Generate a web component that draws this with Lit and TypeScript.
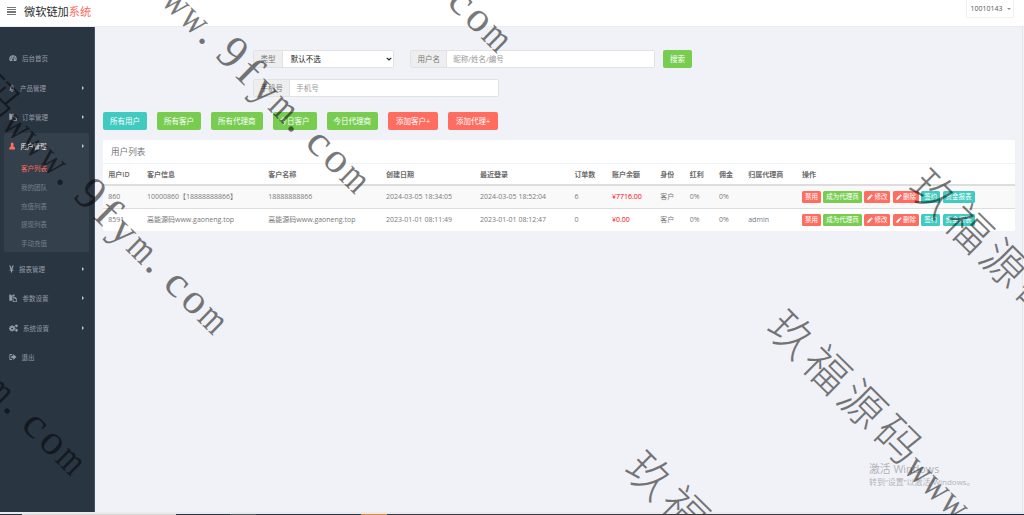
import { css, CSSResultGroup, html, LitElement, nothing, svg, TemplateResult } from "lit";
import { customElement, property } from "lit/decorators.js";
import { classMap } from "lit/directives/class-map.js";
import { styleMap } from "lit/directives/style-map.js";

interface MenuItem {
    icon: string;
    iconWidth: number;
    label: string;
    arrow?: boolean;
    children?: string[];
}

const MENU: MenuItem[] = [
    { icon: "dashboard", iconWidth: 8, label: "后台首页" },
    { icon: "bell", iconWidth: 6, label: "产品管理", arrow: true },
    { icon: "paste", iconWidth: 8, label: "订单管理", arrow: true },
    {
        icon: "user",
        iconWidth: 6.4,
        label: "用户管理",
        arrow: true,
        children: ["客户列表", "我的团队", "充值列表", "提现列表", "手动充值"],
    },
    { icon: "yen", iconWidth: 5, label: "报表管理", arrow: true },
    { icon: "paste", iconWidth: 8.4, label: "参数设置", arrow: true },
    { icon: "cogs", iconWidth: 9, label: "系统设置", arrow: true },
    { icon: "logout", iconWidth: 7.6, label: "退出" },
];

const FILTERS = [
    ["所有用户", "teal"],
    ["所有客户", "green"],
    ["所有代理商", "green"],
    ["今日客户", "green"],
    ["今日代理商", "green"],
    ["添加客户+", "red"],
    ["添加代理+", "red"],
];

const COLUMNS = [
    "用户ID", "客户信息", "客户名称", "创建日期", "最近登录", "订单数",
    "账户余额", "身份", "红利", "佣金", "归属代理商", "操作",
];

const ROWS = [
    [
        "860", "10000860【18888888866】", "18888888866", "2024-03-05 18:34:05",
        "2024-03-05 18:52:04", "6", "¥7716.00", "客户", "0%", "0%", "",
    ],
    [
        "8591", "高能源码www.gaoneng.top", "高能源码www.gaoneng.top", "2023-01-01 08:11:49",
        "2023-01-01 08:12:47", "0", "¥0.00", "客户", "0%", "0%", "admin",
    ],
];

const ACTIONS = [
    { label: "禁用", color: "red" },
    { label: "成为代理商", color: "green" },
    { label: "修改", color: "red", icon: true },
    { label: "删除", color: "red", icon: true },
    { label: "签约", color: "teal" },
    { label: "资金报表", color: "teal" },
];

const ICONS: Record<string, TemplateResult> = {
    dashboard: svg`
        <path fill-rule="evenodd" d="M.5 10a7.500 7.500 0 1 1 15 0c0 1.600-.4 3-1.200 4.200H1.700C.9 13 .5 11.600.5 10zM2.500 9.500a1 1 0 1 0 2 0 1 1 0 0 0-2 0M4.200 6a1 1 0 1 0 2 0 1 1 0 0 0-2 0M9.800 6a1 1 0 1 0 2 0 1 1 0 0 0-2 0M11.500 9.500a1 1 0 1 0 2 0 1 1 0 0 0-2 0M8.200 5.500L7.400 9.800a1.800 1.800 0 1 0 1.600.2l.5-4.300z" />
    `,
    bell: svg`
        <path fill-rule="evenodd" d="M7 1h2v1.300c2.500.5 3.600 2.300 3.600 4.700 0 3 .8 4.500 2.400 5.500V13H1v-.500C2.600 11.500 3.400 10 3.400 7c0-2.400 1.100-4.200 3.600-4.700zM6 14h4a2 2 0 0 1-4 0zM6 7v4h4V7z" />
    `,
    paste: svg`
        <path d="M.5 1h3v1.500h4V1h3v4H6v8.500H.5z" />
        <path fill-rule="evenodd" d="M7 6h5l3.500 3.500V16H7zm1.500 1.500v7h5.500V10.500H11v-3z" />
    `,
    user: svg`
        <path d="M8 1c2.200 0 3.700 1.700 3.700 4 0 1.500-.6 2.900-1.500 3.700C13.500 9.200 15.500 11 15.500 15h-15c0-4 2-5.800 5.300-6.300C4.900 7.900 4.300 6.500 4.300 5 4.300 2.700 5.800 1 8 1z" />
    `,
    yen: svg`
        <path d="M.5 1h4.300L8 6.200 11.200 1h4.300l-4.400 6.500H14V9H9.900v1.400H14v1.500H9.900V15H6.100v-3.100H2v-1.500h4.100V9H2V7.500h2.900z" />
    `,
    cogs: svg`
        <path fill-rule="evenodd" d="M4.500 2.500h2l.3 1.500 1 .4 1.300-.8 1.500 1.500-.8 1.300.4 1 1.300.3v2.300l-1.500.3-.4 1 .8 1.300-1.300 1.300-1.300-.8-1 .4-.3 1.500h-2l-.3-1.500-1-.4-1.200.8L.7 12.600l.8-1.300-.4-1L0 10V8l1.100-.3.4-1L.7 5.400 2 4.100l1.200.8 1-.4zM3.900 9a1.700 1.700 0 1 0 3.400 0 1.700 1.700 0 0 0-3.400 0" />
        <path d="M12.300 1h1.600l.4 1.200 1.700.4v1.800l-1.500.6-.4 1.400h-1.700L12 5l-1.300-.6V2.700l1.300-.5zM12.300 9.500h1.600l.4 1.400 1.700.4v2l-1.500.6-.4 1.600h-1.700L12 14l-1.300-.6v-1.700l1.300-.5z" />
    `,
    logout: svg`
        <path d="M6.500 2H3a2.200 2.200 0 0 0-2.200 2.200v7.600A2.200 2.200 0 0 0 3 14h3.500v-1.800H3.300a.9.9 0 0 1-.7-.9V4.700a.9.9 0 0 1 .7-.9h3.200z" />
        <path d="M9 2L15.800 8 9 14v-3.500H4.800v-5H9z" />
    `,
    pencil: svg`
        <path d="M11.500.500L15.500 4.500 13.300 6.700 9.300 2.700zM8.400 3.600L12.400 7.600 5 15 .5 15.500 1 11z" />
    `,
};

@customElement("admin-icon")
export class AdminIcon extends LitElement {
    @property() public name: string = "";

    protected render(): TemplateResult {
        return html`<svg viewBox="0 0 16 16" preserveAspectRatio="none">${ICONS[this.name]}</svg>`;
    }

    static get styles(): CSSResultGroup {
        return css`
            :host {
                display: block;
                flex: none;
                height: 8px;
                width: 8px;
            }
            svg {
                display: block;
                fill: currentColor;
                height: 100%;
                width: 100%;
            }
        `;
    }
}

@customElement("admin-sidebar")
export class AdminSidebar extends LitElement {
    protected render(): TemplateResult {
        return html`
            <nav class="menu">
                ${MENU.map(
                    (item) => html`
                        <div class=${classMap({ group: true, active: !!item.children })}>
                            <div class="item">
                                <admin-icon
                                    .name=${item.icon}
                                    style=${styleMap({ width: `${item.iconWidth}px` })}
                                ></admin-icon>
                                <span class="label">${item.label}</span>
                                ${item.arrow ? html`<i class="arrow"></i>` : nothing}
                            </div>
                            ${item.children?.map((child) => html`<div class="sub">${child}</div>`)}
                        </div>
                    `
                )}
            </nav>
        `;
    }

    static get styles(): CSSResultGroup {
        return css`
            :host {
                background: #2a3542;
                border-right: 1px solid #465260;
                box-sizing: border-box;
                color: #939ba5;
                display: block;
                flex: none;
                font-size: 6.5px;
                width: 95px;
            }
            .menu {
                display: flex;
                flex-direction: column;
                gap: 3.4px;
                padding: 18.3px 5px 0 4px;
            }
            .group {
                border-radius: 2px;
            }
            .item {
                align-items: center;
                display: flex;
                gap: 5px;
                height: 26px;
                padding: 0 5.5px 0 5px;
            }
            .label {
                flex: 1;
            }
            .arrow {
                border: 2px solid transparent;
                border-left: 2px solid #c3c8ce;
                border-right: 0;
            }
            .active {
                background: #35404d;
            }
            .active .item {
                color: #fff;
            }
            .active admin-icon {
                color: #ff6c60;
            }
            .sub {
                color: #75808b;
                height: 18.6px;
                line-height: 20px;
                padding-left: 17px;
            }
            .sub:nth-child(2) {
                color: #ff6c60;
            }
        `;
    }
}

@customElement("user-table")
export class UserTable extends LitElement {
    protected render(): TemplateResult {
        return html`
            <div class="title">用户列表</div>
            <div class="row head">${COLUMNS.map((name) => html`<span>${name}</span>`)}</div>
            ${ROWS.map(
                (row) => html`
                    <div class="row">
                        ${row.map((cell) => html`<span>${cell}</span>`)}
                        <div class="actions">
                            ${ACTIONS.map(
                                (action) => html`
                                    <a class="action ${action.color}">
                                        ${action.icon
                                            ? html`<admin-icon name="pencil"></admin-icon>`
                                            : nothing}${action.label}
                                    </a>
                                `
                            )}
                        </div>
                    </div>
                `
            )}
        `;
    }

    static get styles(): CSSResultGroup {
        return css`
            :host {
                background: #fff;
                border-radius: 2px;
                color: #797979;
                display: block;
                font-size: 7px;
            }
            .title {
                border-bottom: 1px solid #f1f2f5;
                font-size: 8.6px;
                height: 23px;
                line-height: 24px;
                padding-left: 8px;
            }
            .row {
                align-items: center;
                border-top: 1px solid #ddd;
                display: grid;
                grid-template-columns:
                    38.7px 121.3px 117.8px 94px 94.3px 37.6px
                    48.3px 29.6px 29.2px 29.2px 53.8px 1fr;
                height: 22px;
                line-height: 10px;
                padding-left: 5.3px;
                white-space: nowrap;
            }
            .row span {
                height: 10px;
            }
            .row:nth-child(3) {
                background: #f9f9f9;
            }
            .row span:nth-child(7) {
                color: #f00;
            }
            .row span:nth-child(11) {
                color: #6b7c91;
            }
            .row.head {
                border-bottom: 1px solid #ddd;
                border-top: 0;
                font-weight: 600;
                height: 20px;
                line-height: 11px;
            }
            .row.head span {
                color: #6b6b6b;
            }
            .actions {
                display: flex;
                gap: 2.3px;
            }
            .action {
                align-items: center;
                border-radius: 1.5px;
                color: #fff;
                display: flex;
                font-size: 6.5px;
                height: 12px;
                padding: 0 3px;
            }
            .action admin-icon {
                height: 6px;
                margin-right: 1.3px;
                width: 6px;
            }
            .red {
                background: #ff6c60;
            }
            .green {
                background: #78cd51;
            }
            .teal {
                background: #41cac0;
            }
        `;
    }
}

interface MarkGlyph {
    char: string;
    // Center of the glyph along the baseline
    at: number;
    size: number;
    scale: number;
    kind: string;
}

const MARK_LATIN: [string, number, number][] = [
    ["w", 41, 0.8], ["w", 41, 0.8], ["w", 41, 0.8], [".", 46, 1], ["9", 48, 0.92], ["f", 44, 1.15],
    ["y", 42, 1], ["m", 41, 0.74], [".", 46, 1], ["c", 43, 1.05], ["o", 43, 1], ["m", 41, 0.74],
];

// Han glyphs take 50px each, half-width glyphs 25px
const MARK_GLYPHS: MarkGlyph[] = [
    ..."玖福源码",
].map((char, i) => ({ char, at: 28 + i * 50, size: 45, scale: 1, kind: "cjk" })).concat(
    MARK_LATIN.map(([char, size, scale], i) => ({
        char,
        at: 214.5 + i * 25 - (char === "." ? 5 : 0),
        size,
        scale,
        kind: "latin",
    }))
);

const MARK_ORIGINS = [
    [140, -298], [-2, -157], [-144, -16], [-286, 125], [900, 187], [758, 328], [616, 469],
];

const MARK_ANGLE = 44.6;

@customElement("page-watermark")
export class PageWatermark extends LitElement {
    private isVisible(x: number, y: number, at: number): boolean {
        const rad = (MARK_ANGLE * Math.PI) / 180;
        const cx = x + at * Math.cos(rad) + 8;
        const cy = y + at * Math.sin(rad) - 8;
        return cx > -22 && cx < 1046 && cy > -18 && cy < 532;
    }

    protected render(): TemplateResult {
        return html`
            <svg class="mark" width="1024" height="514">
                ${MARK_ORIGINS.map(
                    ([x, y]) => svg`
                        <g transform="translate(${x} ${y}) rotate(${MARK_ANGLE})">
                            ${MARK_GLYPHS.filter((glyph) => this.isVisible(x, y, glyph.at)).map(
                                (glyph) => svg`
                                    <text
                                        class=${glyph.kind}
                                        font-size=${glyph.size}
                                        transform="translate(${glyph.at} ${glyph.kind === "cjk" ? -2.5 : 0}) scale(${glyph.scale} 1)"
                                    >${glyph.char}</text>
                                `
                            )}
                        </g>
                    `
                )}
            </svg>
        `;
    }

    static get styles(): CSSResultGroup {
        return css`
            .mark {
                display: block;
                opacity: 0.52;
            }
            .mark text {
                text-anchor: middle;
            }
            .cjk {
                font-family: "Noto Sans CJK SC", sans-serif;
                font-weight: 300;
            }
            .latin {
                font-family: "Liberation Serif", serif;
            }
        `;
    }
}

@customElement("app-root")
export class AppRoot extends LitElement {
    protected render(): TemplateResult {
        return html`
            <header class="header">
                <div class="burger"><i></i><i></i><i></i><i></i></div>
                <div class="logo">微软链加<span>系统</span></div>
                <div class="account">10010143<i class="caret"></i></div>
            </header>
            <div class="body">
                <admin-sidebar></admin-sidebar>
                <main class="main">
                    <div class="search">
                        <div class="line">
                            <div class="field type">
                                <label class="addon">类型</label>
                                <div class="control select">
                                    默认不选
                                    <svg class="chevron" viewBox="0 0 6 4"><path d="M.8.800L3 3 5.200.8" /></svg>
                                </div>
                            </div>
                            <div class="field name">
                                <label class="addon">用户名</label>
                                <div class="control">昵称/姓名/编号</div>
                            </div>
                            <a class="button green">搜索</a>
                        </div>
                        <div class="line">
                            <div class="field phone">
                                <label class="addon">手机号</label>
                                <div class="control">手机号</div>
                            </div>
                        </div>
                    </div>
                    <div class="filters">
                        ${FILTERS.map(([label, color]) => html`<a class="button ${color}">${label}</a>`)}
                    </div>
                    <user-table></user-table>
                </main>
                <div class="scrollbar"></div>
            </div>
            <footer class="taskbar"></footer>
            <div class="activate">
                <div class="activate-title">激活 Windows</div>
                <div>转到“设置”以激活 Windows。</div>
            </div>
            <page-watermark class="overlay"></page-watermark>
        `;
    }

    static get styles(): CSSResultGroup {
        return css`
            :host {
                background: #f1f2f7;
                display: flex;
                flex-direction: column;
                font-family: "Open Sans", "Noto Sans CJK SC", sans-serif;
                font-size: 7.5px;
                height: 515px;
                overflow: hidden;
                position: relative;
                width: 1024px;
            }
            .header {
                align-items: flex-start;
                background: #fff;
                border-bottom: 1px solid #ebecef;
                box-sizing: border-box;
                display: flex;
                flex: none;
                height: 27px;
                padding: 0 10.5px 0 6.5px;
            }
            .burger {
                display: flex;
                flex-direction: column;
                gap: 1px;
                margin-top: 7px;
                width: 9px;
            }
            .burger i {
                background: #777;
                height: 1.2px;
            }
            .logo {
                color: #2e2e2e;
                flex: 1;
                font-size: 11.2px;
                line-height: 23px;
                margin-left: 8.5px;
            }
            .logo span {
                color: #ff6c60;
            }
            .account {
                align-items: center;
                border: 1px solid #f0f0f0;
                border-radius: 0 0 2px 2px;
                border-top: 0;
                box-sizing: border-box;
                color: #555;
                display: flex;
                font-size: 7px;
                gap: 4px;
                height: 18px;
                padding-left: 4px;
                width: 48px;
            }
            .caret {
                border: 2px solid transparent;
                border-bottom: 0;
                border-top: 2px solid #8a93a0;
            }
            .body {
                display: flex;
                flex: none;
                height: 485px;
            }
            .main {
                flex: 1;
                padding: 23.4px 7px 0 8px;
            }
            .scrollbar {
                background: #f5f5f8;
                border-left: 1px solid #e4e5ea;
                width: 1px;
            }
            .search {
                display: flex;
                flex-direction: column;
                gap: 11px;
                padding-left: 150px;
            }
            .line {
                display: flex;
            }
            .field {
                border: 1px solid #e2e2e4;
                border-radius: 2px;
                box-sizing: border-box;
                display: flex;
                height: 18px;
                line-height: 16px;
            }
            .type {
                margin-right: 16px;
                width: 141px;
            }
            .name {
                margin-right: 8px;
                width: 245px;
            }
            .phone {
                width: 246px;
            }
            .addon {
                background: #eee;
                border-right: 1px solid #e2e2e4;
                color: #777;
                padding: 0 6.4px;
            }
            .control {
                background: #fff;
                color: #999;
                flex: 1;
                padding-left: 6px;
            }
            .select {
                align-items: center;
                color: #222;
                display: flex;
                justify-content: space-between;
                padding: 0 1px 0 8px;
            }
            .chevron {
                fill: none;
                height: 4px;
                stroke: #222;
                stroke-width: 1.2;
                width: 6px;
            }
            .filters {
                display: flex;
                gap: 10px;
                margin: 15px 0 10px;
            }
            .button {
                border-radius: 2px;
                color: #fff;
                height: 18px;
                line-height: 18px;
                padding: 0 7px;
            }
            .filters .red {
                padding: 0 7.9px;
            }
            .green {
                background: #78cd51;
            }
            .teal {
                background: #41cac0;
            }
            .red {
                background: #ff6c60;
            }
            .taskbar {
                background: linear-gradient(
                    90deg,
                    #24393f 0 22px,
                    #d5d5d5 22px 176px,
                    #24393f 176px 230px,
                    #47575c 230px 256px,
                    #24393f 256px 361px,
                    #d98a3d 361px 387px,
                    #3a3a40 387px 880px,
                    #16294a 880px
                );
                border-top: 2px solid #ebebed;
                height: 1px;
            }
            .activate {
                bottom: 27px;
                color: #b2b3b7;
                font-size: 8px;
                left: 869px;
                line-height: 12px;
                position: absolute;
            }
            .activate-title {
                font-size: 10.8px;
                line-height: 14px;
            }
            .overlay {
                left: 0;
                pointer-events: none;
                position: absolute;
                top: 0;
            }
        `;
    }
}
